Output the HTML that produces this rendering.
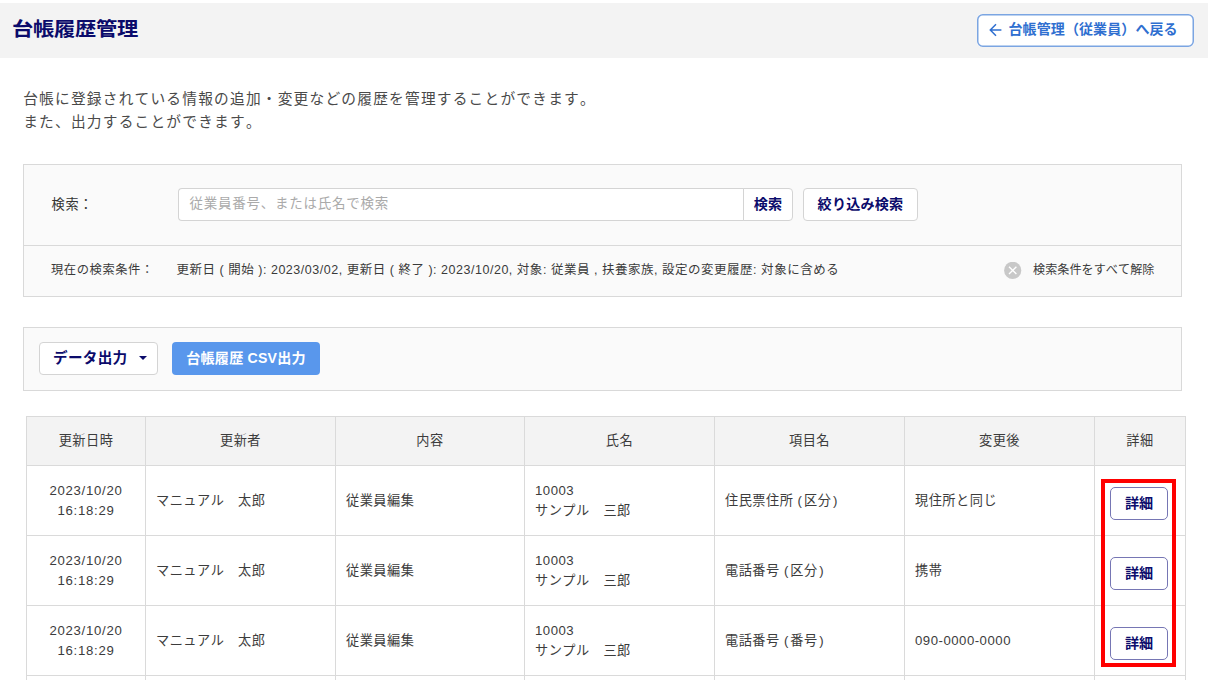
<!DOCTYPE html>
<html lang="ja">
<head>
<meta charset="utf-8">
<title>台帳履歴管理</title>
<style>
*{box-sizing:border-box;margin:0;padding:0}
html,body{width:1210px;height:680px;overflow:hidden;background:#fff}
body{position:relative;font-kerning:none;letter-spacing:.5px;font-family:"Liberation Sans","Noto Sans CJK JP",sans-serif;color:#333;font-size:13.2px}
.abs{position:absolute}
.hdr{left:0;top:3px;width:1208px;height:55px;background:#f3f3f3}
.title{left:11.8px;top:13px;height:32px;line-height:32px;font-size:20px;letter-spacing:-.28px;transform:scale(1.065,.955);transform-origin:0 26px;font-weight:bold;color:#0b0b6b;white-space:nowrap}
.back{left:977px;top:14px;width:217px;height:33px;border:1px solid transparent;border-radius:5px;background:#fff;color:#2f6fd0;font-weight:bold;font-size:14px;letter-spacing:0;line-height:31px;white-space:nowrap}
.back .arr{position:absolute;left:10.8px;top:8px;width:14px;height:14px}
.back .fr{position:absolute;left:-1px;top:-1px;width:217px;height:33px}
.back .t{position:absolute;left:30.5px;letter-spacing:.1px;top:-1px}
.desc{left:23.2px;top:88px;font-size:14.7px;letter-spacing:1.22px;line-height:23px;color:#4a4a4a;white-space:nowrap}
.box{background:#fafafa;border:1px solid #d9d9d9}
.sbox{left:23px;top:164px;width:1159px;height:133px}
.sdiv{left:24px;top:245px;width:1157px;height:1px;background:#d9d9d9}
.lbl{white-space:nowrap;letter-spacing:.7px;left:51.5px}
.inp{left:178px;top:188px;width:566px;height:33px;border:1px solid #d4d4d4;border-right:none;border-radius:4px 0 0 4px;background:#fff;color:#aaa;font-size:13.5px;letter-spacing:.75px;line-height:29px;padding-left:10.5px;white-space:nowrap}
.btn{background:#fff;border:1px solid #d4d4d4;border-radius:4px;color:#0b0b6b;font-weight:bold;font-size:14.1px;text-align:center;white-space:nowrap;letter-spacing:.2px}
.sbtn{left:743px;top:188px;width:50px;height:33px;line-height:31px;border-radius:0 4px 4px 0}
.fbtn{left:803px;top:188px;width:115px;height:33px;line-height:31px}
.cond{font-size:12.3px;line-height:20px;white-space:nowrap;color:#3a3a3a;letter-spacing:.55px}
.cond.tx{font-size:12.5px;letter-spacing:.52px}
.cond.cl{font-size:12.1px;letter-spacing:.05px}
.tbox{left:23px;top:327px;width:1159px;height:64px}
.dbtn{left:39px;top:342px;width:119px;height:33px;line-height:30px;text-align:left;padding-left:13px;font-size:14.6px;letter-spacing:.3px}
.caret{left:139px;top:356px;width:0;height:0;border-left:4.5px solid transparent;border-right:4.5px solid transparent;border-top:4.6px solid #0b0b6b}
.cbtn{left:172px;top:342px;width:148px;height:33px;line-height:33px;background:#5997ec;border-radius:4px;color:#fff;font-weight:bold;font-size:14.1px;letter-spacing:.2px;text-align:center;white-space:nowrap}
table{position:absolute;left:26px;top:416px;border-collapse:collapse;table-layout:fixed;width:1159px;letter-spacing:.5px}
th,td{border:1px solid #dadada;font-size:13.2px;font-weight:normal;color:#3c3c3c;line-height:20px;vertical-align:middle}
th{height:49px;background:#f3f3f3;text-align:center}
td{height:70px;padding:0 10px;text-align:left;background:#fff}
td.c{text-align:center;letter-spacing:.7px}
.p{letter-spacing:2px}
.det{display:block;position:relative;left:-1px;margin:5px auto 0;width:58px;height:33px;line-height:31px;border:1px solid #7676b4;border-radius:5px;background:#fff;color:#0b0b6b;font-weight:bold;font-size:14.1px;text-align:center;letter-spacing:0}
.red{left:1101px;top:479px;width:75px;height:188px;border:4px solid #f00}
</style>
</head>
<body>
<div class="abs hdr"></div>
<div class="abs title">台帳履歴管理</div>
<div class="abs back"><svg class="fr" viewBox="0 0 217 33"><rect x=".75" y=".75" width="215.5" height="31.5" rx="5" fill="none" stroke="#7ba5e2" stroke-width="1.5"/></svg><svg class="arr" viewBox="0 0 14 14"><path d="M12.4 7H1.6M7 1.3L1.3 7L7 12.7" fill="none" stroke="#2f6fd0" stroke-width="1.5"/></svg><span class="t">台帳管理（従業員）へ戻る</span></div>
<div class="abs desc">台帳に登録されている情報の追加・変更などの履歴を管理することができます。<br>また、出力することができます。</div>

<div class="abs box sbox"></div>
<div class="abs sdiv"></div>
<div class="abs lbl" style="top:195px;line-height:20px">検索：</div>
<div class="abs inp">従業員番号、または氏名で検索</div>
<div class="abs btn sbtn">検索</div>
<div class="abs btn fbtn">絞り込み検索</div>
<div class="abs cond" style="left:51px;top:260px">現在の検索条件：</div>
<div class="abs cond tx" style="left:176.5px;top:260px">更新日 ( 開始 ): 2023/03/02, 更新日 ( 終了 ): 2023/10/20, 対象: 従業員 , 扶養家族, 設定の変更履歴: 対象に含める</div>
<svg class="abs" style="left:1004px;top:262px" width="18" height="18" viewBox="0 0 18 18"><circle cx="8.7" cy="8.4" r="8.6" fill="#c8c8c8"/><path d="M5 4.8L12.4 12M12.4 4.8L5 12" stroke="#fff" stroke-width="1.35"/></svg>
<div class="abs cond cl" style="left:1033px;top:260px">検索条件をすべて解除</div>

<div class="abs box tbox"></div>
<div class="abs btn dbtn">データ出力</div>
<div class="abs caret"></div>
<div class="abs cbtn">台帳履歴 CSV出力</div>

<table>
<colgroup><col style="width:119px"><col style="width:190px"><col style="width:189px"><col style="width:190px"><col style="width:190px"><col style="width:190px"><col style="width:91px"></colgroup>
<tr><th>更新日時</th><th>更新者</th><th>内容</th><th>氏名</th><th>項目名</th><th>変更後</th><th>詳細</th></tr>
<tr><td class="c">2023/10/20<br>16:18:29</td><td>マニュアル　太郎</td><td>従業員編集</td><td>10003<br>サンプル　三郎</td><td>住民票住所 <span class="p">(</span>区<span class="p">分</span>)</td><td>現住所と同じ</td><td class="c"><span class="det">詳細</span></td></tr>
<tr><td class="c">2023/10/20<br>16:18:29</td><td>マニュアル　太郎</td><td>従業員編集</td><td>10003<br>サンプル　三郎</td><td>電話番号 <span class="p">(</span>区<span class="p">分</span>)</td><td>携帯</td><td class="c"><span class="det">詳細</span></td></tr>
<tr><td class="c">2023/10/20<br>16:18:29</td><td>マニュアル　太郎</td><td>従業員編集</td><td>10003<br>サンプル　三郎</td><td>電話番号 <span class="p">(</span>番<span class="p">号</span>)</td><td>090-0000-0000</td><td class="c"><span class="det">詳細</span></td></tr>
<tr><td class="c">2023/10/20<br>16:18:29</td><td>マニュアル　太郎</td><td>従業員編集</td><td>10003<br>サンプル　三郎</td><td>電話番号 <span class="p">(</span>番<span class="p">号</span>)</td><td>090-0000-0000</td><td class="c"><span class="det">詳細</span></td></tr>
</table>
<div class="abs red"></div>
</body>
</html>
